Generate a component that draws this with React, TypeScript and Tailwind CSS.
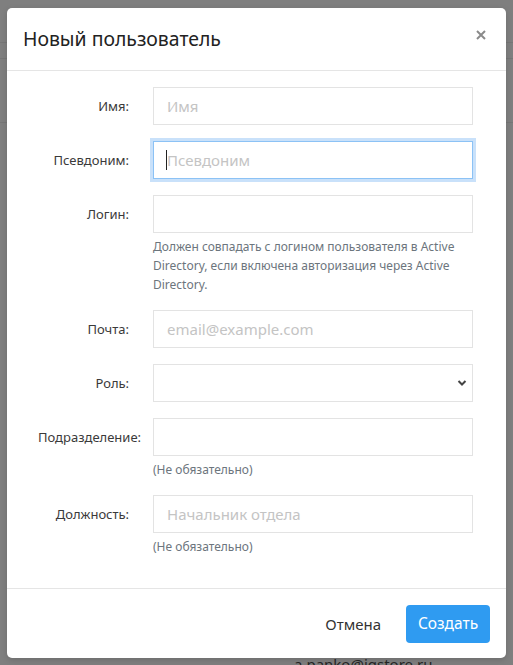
import React from "react";

type Field = {
  label: string;
  placeholder?: string;
  hint?: string;
  kind?: "input" | "select";
  focused?: boolean;
};

const FIELDS: Field[] = [
  { label: "Имя:", placeholder: "Имя" },
  { label: "Псевдоним:", placeholder: "Псевдоним", focused: true },
  {
    label: "Логин:",
    hint: "Должен совпадать с логином пользователя в Active Directory, если включена авторизация через Active Directory.",
  },
  { label: "Почта:", placeholder: "email@example.com" },
  { label: "Роль:", kind: "select" },
  { label: "Подразделение:", hint: "(Не обязательно)" },
  { label: "Должность:", placeholder: "Начальник отдела", hint: "(Не обязательно)" },
];

const font = { fontFamily: '"Noto Sans", "Open Sans", sans-serif' };

function FormRow({ field }: { field: Field }) {
  const base =
    "block w-full h-[38px] rounded-none border bg-white px-[13px] text-[15px] text-[#333] outline-none placeholder:text-[#c4c4c4]";
  const border = field.focused
    ? "border-[#8cc2f5] shadow-[0_0_0_3px_#c9e1fa]"
    : "border-[#e3e3e3]";

  return (
    <div className="flex items-start pl-[31px] mb-4">
      <label className="w-[91px] shrink-0 whitespace-nowrap text-right text-[13px] leading-[38px] text-[#3a3a3a]">
        {field.label}
      </label>
      <div className="ml-[24px] w-[320px]">
        <div className="relative">
          {field.kind === "select" ? (
            <>
              <select className={`${base} ${border} appearance-none`} defaultValue="">
                <option value=""></option>
              </select>
              <svg
                className="absolute right-[6px] top-[15px] pointer-events-none"
                width="10"
                height="8"
                viewBox="0 0 10 8"
              >
                <path d="M1.5 2l3.5 3.5L8.5 2" fill="none" stroke="#444" strokeWidth="2" />
              </svg>
            </>
          ) : (
            <input className={`${base} ${border}`} placeholder={field.placeholder} />
          )}
          {field.focused && (
            <span className="absolute left-[13px] top-[9px] h-[20px] w-px bg-[#222]" />
          )}
        </div>
        {field.hint && (
          <p className="mt-[4px] text-[12px] leading-[19px] text-[#6c757d]">{field.hint}</p>
        )}
      </div>
    </div>
  );
}

export default function App() {
  return (
    <div className="relative h-[665px] w-full overflow-hidden bg-[#7f7f7f]" style={font}>
      {/* page behind the backdrop */}
      <div className="absolute inset-x-0 top-[42px] h-px bg-[#767676]" />
      <div className="absolute inset-x-0 top-[58px] h-px bg-[#767676]" />
      <div className="absolute inset-x-0 top-[122px] h-px bg-[#767676]" />
      <div className="absolute left-[294px] top-[653px] text-[15px] text-[#262626]">
        a.panko@igstore.ru
      </div>

      <div className="relative px-[7px] pt-[8px]">
        <div className="rounded-[5px] bg-white shadow-[0_2px_6px_rgba(0,0,0,0.15)]">
          <div className="flex items-center justify-between border-b border-[#e5e5e5] px-4 py-4">
            <h2 className="text-[19.4px] leading-[30px] text-[#222]">Новый пользователь</h2>
            <button type="button" className="mb-[8px] p-1">
              <svg width="10" height="10" viewBox="0 0 10 10">
                <path d="M1 1l8 8M9 1L1 9" stroke="#8a8a8a" strokeWidth="2" />
              </svg>
            </button>
          </div>

          <form className="pt-4 pb-4">
            {FIELDS.map((f) => (
              <FormRow key={f.label} field={f} />
            ))}
          </form>

          <div className="flex items-center justify-end border-t border-[#e5e5e5] px-4 pt-4 pb-[15px]">
            <button type="button" className="mr-[13px] h-[38px] px-[12px] text-[15px] text-[#333]">
              Отмена
            </button>
            <button
              type="button"
              className="h-[38px] w-[84px] rounded-[4px] bg-[#2f9bf1] text-[15.5px] text-white"
            >
              Создать
            </button>
          </div>
        </div>
      </div>
    </div>
  );
}
